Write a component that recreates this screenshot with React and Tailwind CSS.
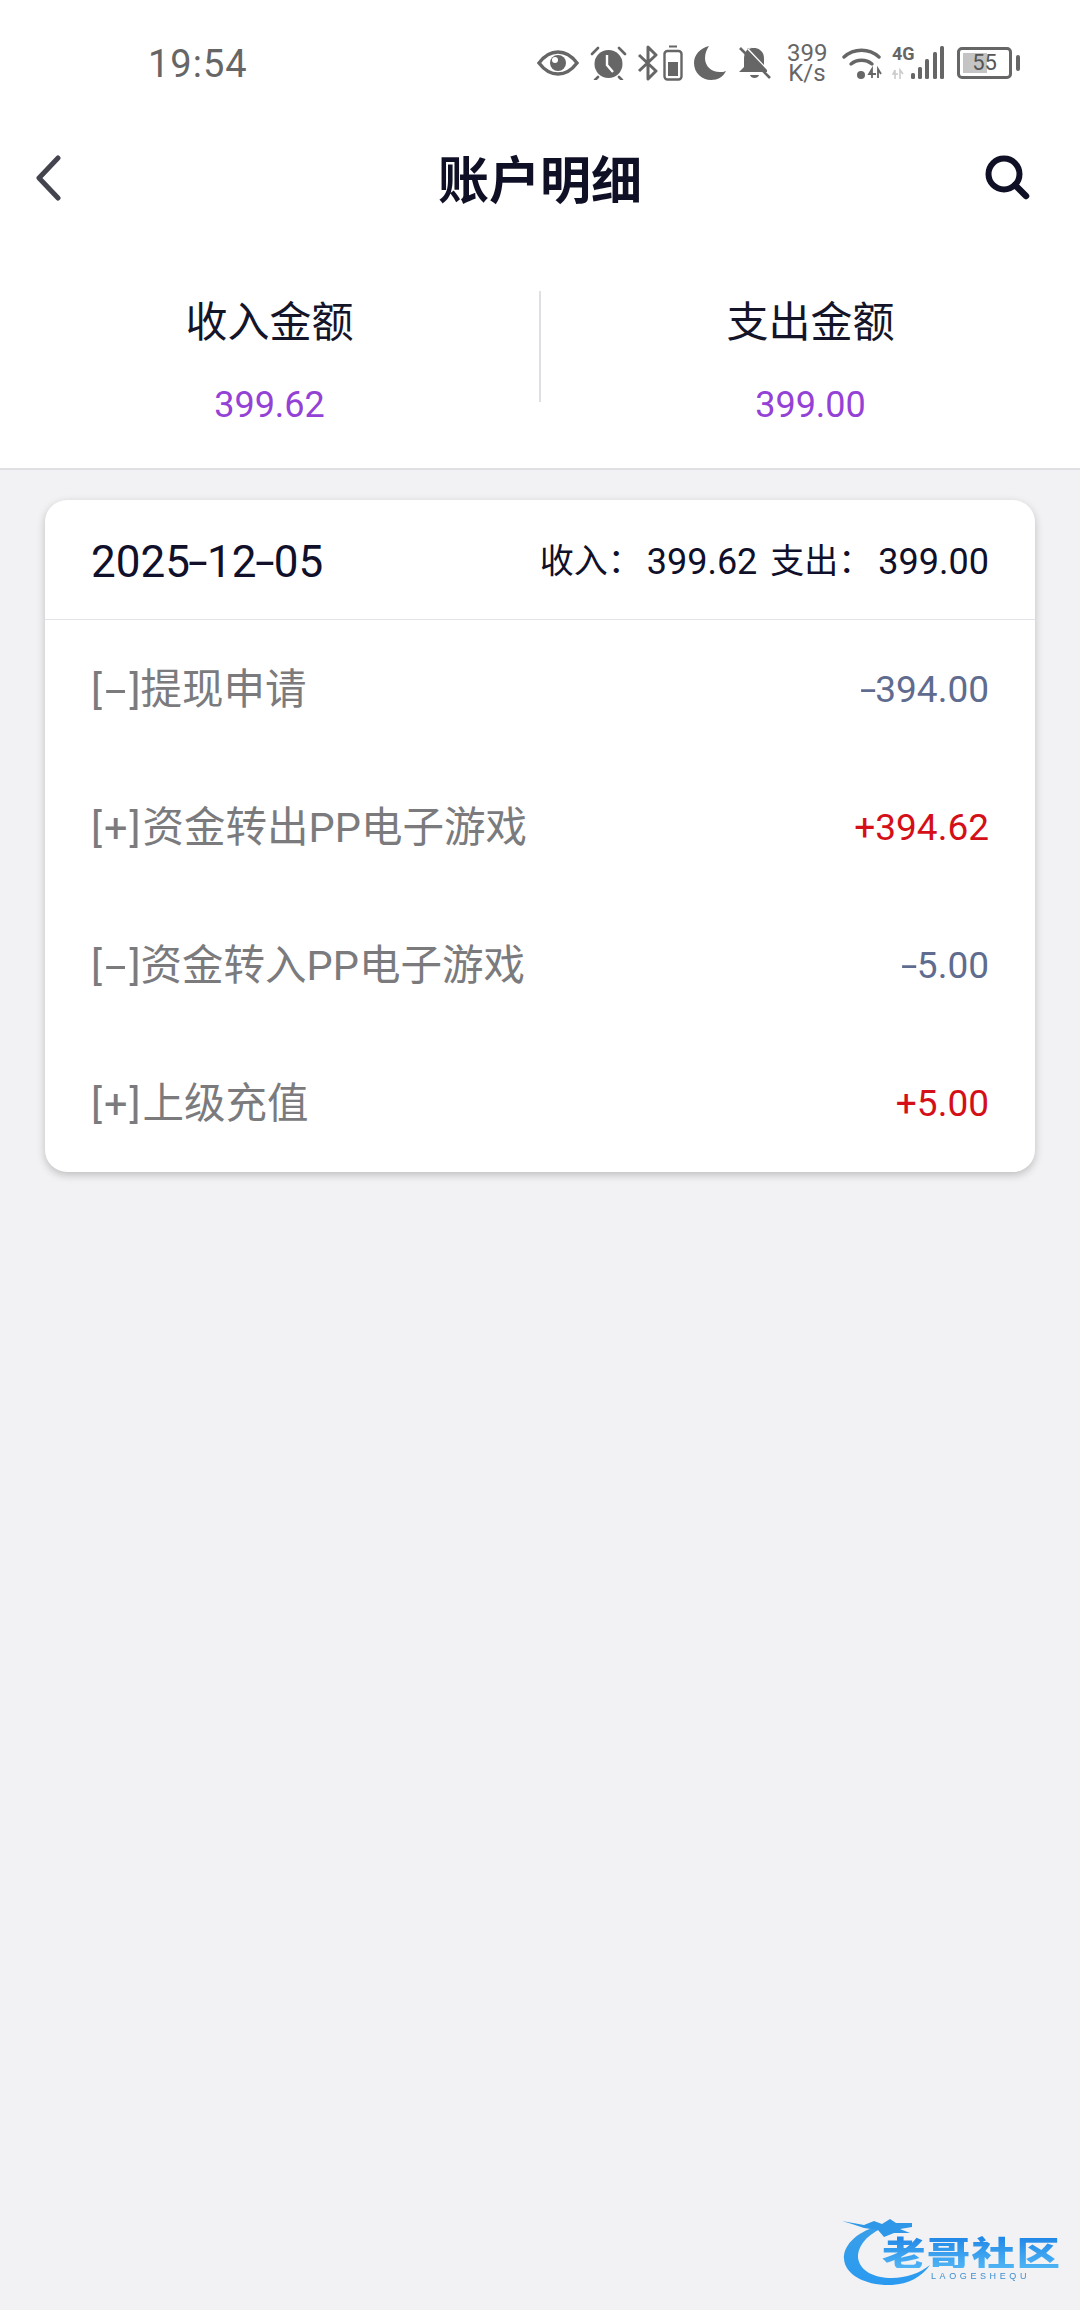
import React from "react";

const cjk = "font-['Roboto','Noto_Sans_CJK_SC',sans-serif]";

// the reference font has a much wider hyphen than Roboto
function Dash() {
  return <span className="inline-block mx-[2.5px] scale-x-[1.6]">-</span>;
}

const rows = [
  { sign: "-", label: "提现申请", amount: "394.00", color: "text-[#5f6c8f]" },
  { sign: "+", label: "资金转出PP电子游戏", amount: "394.62", color: "text-[#d40f18]" },
  { sign: "-", label: "资金转入PP电子游戏", amount: "5.00", color: "text-[#5f6c8f]" },
  { sign: "+", label: "上级充值", amount: "5.00", color: "text-[#d40f18]" },
];

function StatusIcons() {
  return (
    <div className="flex items-center text-[#666]">
      {/* eye */}
      <svg width="42" height="26" viewBox="0 0 42 26" fill="none">
        <path d="M2 13C8 5 14 2 21 2s13 3 19 11c-6 8-12 11-19 11S8 21 2 13Z" stroke="#666" strokeWidth="3.4" />
        <circle cx="21" cy="13" r="8" fill="#666" />
        <circle cx="18" cy="10" r="3" fill="#fff" />
      </svg>
      {/* alarm */}
      <svg className="ml-[11px]" width="37" height="34" viewBox="0 0 37 34" fill="none">
        <circle cx="18.5" cy="18" r="14" fill="#666" />
        <path d="M17 9v10l6 7" stroke="#fff" strokeWidth="2.4" />
        <path d="M2 8l6-6M35 8l-6-6M8 31l-3 3M29 31l3 3" stroke="#666" strokeWidth="2.6" strokeLinecap="round" />
      </svg>
      {/* bluetooth */}
      <svg className="ml-[10px]" width="22" height="36" viewBox="0 0 22 36" fill="none">
        <path d="M2 10l17 16-8 8V2l8 8L2 26" stroke="#666" strokeWidth="3" strokeLinejoin="round" />
      </svg>
      {/* small battery */}
      <svg className="ml-[4px]" width="20" height="36" viewBox="0 0 20 36" fill="none">
        <path d="M6 1.5h8" stroke="#666" strokeWidth="2" />
        <rect x="1.5" y="6" width="17" height="28.5" rx="3" stroke="#666" strokeWidth="2.4" />
        <rect x="5" y="17" width="10" height="14" fill="#666" />
      </svg>
      {/* moon */}
      <svg className="ml-[11px]" width="32" height="34" viewBox="0 0 32 34">
        <path d="M15 0C6 2 0 9 0 17c0 10 8 17 17 17 7 0 12-3 15-9-2 1-4 1-6 1-9 0-15-6-15-14 0-5 2-9 4-12Z" fill="#666" />
      </svg>
      {/* muted bell */}
      <svg className="ml-[12px]" width="33" height="36" viewBox="0 0 33 36" fill="none">
        <path d="M16 2c-7 0-10 6-10 12v8l-5 5h28v-2L9 4c2-1 4-2 7-2Zm9 10 2 3" fill="#666" />
        <path d="M22 5c3 2 4 5 4 9v6L11 4c1-1 8-2 11 1Z" fill="#666" />
        <path d="M12 30c1 4 8 4 9 0Z" fill="#666" />
        <path d="M2 3l30 30" stroke="#666" strokeWidth="2.6" />
      </svg>
      <div className="ml-[16px] w-[40px] text-[24px] leading-[20px] text-center whitespace-nowrap font-['Roboto',sans-serif]">
        <div>399</div>
        <div>K/s</div>
      </div>
      {/* wifi */}
      <svg className="ml-[15px]" width="40" height="34" viewBox="0 0 40 34" fill="none">
        <path d="M2 11C12 2 27 2 37 11" stroke="#666" strokeWidth="3.4" strokeLinecap="round" />
        <path d="M9 18c6-5 15-5 21 0" stroke="#666" strokeWidth="3.4" strokeLinecap="round" />
        <circle cx="19" cy="29" r="4" fill="#666" />
        <path d="M30 32v-9l-3 5h7M36 32v-9l3 5" stroke="#666" strokeWidth="1.8" />
      </svg>
      {/* cell signal */}
      <div className="ml-[10px] relative w-[54px] h-[34px]">
        <span className="absolute left-0 -top-[1px] text-[18px] leading-[18px] font-bold text-[#666] font-['Roboto',sans-serif]">4G</span>
        <svg className="absolute left-0 top-0" width="54" height="34" viewBox="0 0 54 34" fill="none">
          <path d="M3 33v-9l-2 4h5M8 33v-9l3 4" stroke="#ccc" strokeWidth="1.6" />
          <rect x="19" y="27" width="4" height="6" rx="1.5" fill="#666" />
          <rect x="26" y="21" width="4" height="12" rx="1.5" fill="#666" />
          <rect x="33" y="13" width="4" height="20" rx="1.5" fill="#666" />
          <rect x="41" y="6" width="4" height="27" rx="1.5" fill="#666" />
          <rect x="48" y="0" width="4" height="33" rx="1.5" fill="#666" />
        </svg>
      </div>
      {/* battery */}
      <div className="ml-[11px] flex items-center gap-[4px]">
        <div className="relative w-[55px] h-[32px] rounded-[5px] border-[3px] border-[#666] flex items-center justify-center">
          <div className="absolute left-[3px] top-[3px] bottom-[3px] w-[24px] bg-[#c4c4c4]" />
          <span className="relative text-[22px] leading-none text-[#555] font-['Roboto',sans-serif]">55</span>
        </div>
        <div className="w-[4px] h-[16px] rounded-[2px] bg-[#666]" />
      </div>
    </div>
  );
}

function Logo() {
  return (
    <div className="relative w-[222px] h-[76px] blur-[0.6px]">
      <svg className="absolute left-0 top-0" width="110" height="76" viewBox="0 0 110 76" fill="none">
        <defs>
          <linearGradient id="swoosh" x1="0" y1="0" x2="0" y2="1">
            <stop offset="0" stopColor="#3a9fe8" />
            <stop offset="1" stopColor="#2a9af0" />
          </linearGradient>
        </defs>
        <path d="M36 9C12 16 1 30 2 42c1 16 22 27 48 26 16-1 30-8 38-20-10 8-24 13-38 13-18 0-32-7-34-20-1-10 7-22 24-30Z" fill="url(#swoosh)" />
        <path d="M0 4l22 4 10-4 8 3 8-5 6 4 16 0 0 4-12 2 10 4-16 0-10 4-6-7-14-2-12-4-10-3Z" fill="#2f97e8" />
      </svg>
      <div className="absolute left-[40px] top-[19px] origin-left scale-x-[1.28] text-[34px] leading-[32px] font-black tracking-[1px] whitespace-nowrap bg-gradient-to-b from-[#1f86e6] to-[#4fb4f4] bg-clip-text text-transparent font-['Noto_Sans_CJK_SC',sans-serif]">
        老哥社区
      </div>
      <div className="absolute left-[89px] top-[53px] text-[9px] leading-[12px] tracking-[3.6px] whitespace-nowrap text-[#3c8fd0] font-['Liberation_Sans',sans-serif]">
        LAOGESHEQU
      </div>
    </div>
  );
}

export default function App() {
  return (
    <div className={`relative w-[1080px] h-[2310px] overflow-hidden bg-[#f2f2f4] ${cjk}`}>
      <div className="bg-white border-b-2 border-[#dfe0e3]">
        {/* status bar */}
        <div className="h-[126px] flex items-center justify-between pl-[148px] pr-[60px]">
          <span className="pt-[2px] text-[38px] tracking-[1px] text-[#666]">19:54</span>
          <StatusIcons />
        </div>

        {/* nav */}
        <div className="h-[104px] flex items-center justify-between pl-[34px] pr-[50px]">
          <div className="w-[116px]">
            <svg width="28" height="46" viewBox="0 0 28 46" fill="none">
              <path d="M24 3L5 23l19 20" stroke="#44444f" strokeWidth="5" strokeLinecap="round" strokeLinejoin="round" />
            </svg>
          </div>
          <h1 className="-mt-[2px] text-[51px] font-bold text-[#0f0f25] font-['Noto_Sans_CJK_SC',sans-serif]">账户明细</h1>
          <div className="w-[100px] flex justify-end -mt-[2px]">
            <svg width="46" height="46" viewBox="0 0 46 46" fill="none">
              <circle cx="20" cy="20" r="15.5" stroke="#0f0f25" strokeWidth="6" />
              <path d="M31 31l11 11" stroke="#0f0f25" strokeWidth="6.5" strokeLinecap="round" />
            </svg>
          </div>
        </div>

        {/* income / expense */}
        <div className="h-[238px] pt-[61px] flex">
          <div className="flex-1 flex flex-col items-center">
            <span className="text-[42px] leading-[56px] text-[#15152a] font-['Noto_Sans_CJK_SC',sans-serif]">收入金额</span>
            <span className="mt-[30px] text-[36px] leading-[56px] text-[#9442d6]">399.62</span>
          </div>
          <div className="w-[2px] h-[111px] bg-[#dfe0e3]" />
          <div className="flex-1 flex flex-col items-center">
            <span className="text-[42px] leading-[56px] text-[#15152a] font-['Noto_Sans_CJK_SC',sans-serif]">支出金额</span>
            <span className="mt-[30px] text-[36px] leading-[56px] text-[#9442d6]">399.00</span>
          </div>
        </div>
      </div>

      {/* day card */}
      <div className="mx-[45px] mt-[30px] bg-white rounded-[22px] shadow-[0_3px_8px_rgba(0,0,0,0.22)]">
        <div className="h-[120px] pt-[4px] px-[46px] flex items-center justify-between border-b border-[#e3e4e7] text-[#10102a]">
          <span className="text-[44px]">2025<Dash />12<Dash />05</span>
          <div className="flex items-center text-[36px]">
            <span className="text-[34px]">收入：</span>
            <span className="ml-[5px]">399.62</span>
            <span className="ml-[13px] text-[34px]">支出：</span>
            <span className="ml-[6px]">399.00</span>
          </div>
        </div>
        {rows.map((row) => (
          <div key={row.sign + row.label} className="h-[138px] pt-[2px] px-[46px] flex items-center justify-between">
            <span className="text-[41.5px] text-[#7b7b7e]">
              {row.sign === "-" ? <>[<span className="inline-block mx-[8px] scale-x-[1.9]">-</span>]</> : <span className="tracking-[2px]">[+]</span>}
              {row.label}
            </span>
            <span className={`text-[37px] ${row.color}`}>
              {row.sign === "-" ? <Dash /> : "+"}
              {row.amount}
            </span>
          </div>
        ))}
      </div>

      <div className="absolute right-[16px] bottom-[17px]">
        <Logo />
      </div>
    </div>
  );
}
